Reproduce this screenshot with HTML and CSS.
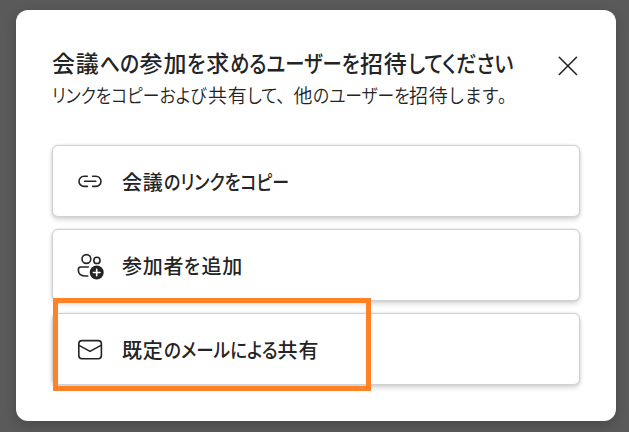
FILE: index.html
```html
<!DOCTYPE html>
<html lang="ja">
<head>
  <meta charset="UTF-8" />
  <meta name="viewport" content="width=device-width, initial-scale=1.0"/>
  <title>会議への招待</title>
  <link rel="stylesheet" href="styles.css">
</head>
<body>
  <div class="dialog" role="dialog">
    <div class="dialog-header">
      <div class="heading">
        <h1>会議<span class="kana title-1">への</span>参加<span class="kana title-2">を</span>求<span class="kana title-3">めるユーザーを</span>招待<span class="kana title-4">してください</span></h1>
        <p><span class="kana sub-1">リンクをコピーおよび</span>共有<span class="kana sub-2">して、</span>他<span class="kana sub-3">のユーザーを</span>招待<span class="kana sub-4">します。</span></p>
      </div>
      <button class="close-btn" aria-label="閉じる">
        <svg width="20" height="20" viewBox="0 0 20 20"><path d="M1.3 1.3l17.2 17.2M18.5 1.3L1.3 18.5"/></svg>
      </button>
    </div>

    <div class="options">
      <button class="option">
        <svg width="28" height="28" viewBox="0 0 28 28">
          <path d="M11.3 8.2H8.1a5.1 5.1 0 0 0 0 10.2h3.2M16.7 8.2h3.2a5.1 5.1 0 0 1 0 10.2h-3.2M8.6 13.3h11.2"/>
        </svg>
        <div class="label">会議<span class="kana copy-1">のリンクをコピー</span></div>
      </button>
      <button class="option">
        <svg width="28" height="28" viewBox="0 0 28 28">
          <circle cx="10.4" cy="7" r="4.4"/>
          <circle cx="20.9" cy="8.4" r="3.1"/>
          <path d="M12.3 15H4.8a2.4 2.4 0 0 0-2.4 2.4v1c0 3.6 3.3 5.6 7.8 5.6h1.6"/>
          <circle class="badge" cx="20.7" cy="20.5" r="7"/>
          <path class="plus" d="M20.7 17.2v6.6M17.4 20.5h6.6"/>
        </svg>
        <div class="label">参加者<span class="kana add-1">を</span>追加</div>
      </button>
      <button class="option">
        <svg width="28" height="28" viewBox="0 0 28 28">
          <rect x="2.8" y="4.6" width="22.6" height="18.2" rx="3.2"/>
          <path d="M3 9.4l11 6 11-6"/>
        </svg>
        <div class="label">既定<span class="kana mail-1">のメールによる</span>共有</div>
      </button>
      <div class="highlight"></div>
    </div>
  </div>
</body>
</html>
```
FILE: styles.css
```css
* {
  margin: 0; padding: 0; box-sizing: border-box;
  font-family: 'Noto Sans CJK JP', sans-serif;
}

body {
  background-color: #5a5a5a;
  color: #242424;
  height: 100vh;
  padding: 10px 13px 11px 16px;
  overflow: hidden;
}

.dialog {
  height: 411px;
  padding: 35px 36px 0;
  background-color: #ffffff;
  border-radius: 12px;
  box-shadow: 0 4px 12px rgba(0, 0, 0, 0.2);
}

.dialog-header {
  display: flex;
  justify-content: space-between;
  height: 100px;
}

.heading {
  white-space: nowrap;
}

h1 {
  font-size: 23px;
  line-height: 34px;
  letter-spacing: 0.8px;
  font-weight: 500;
}

.heading p {
  margin-top: 2px;
  font-size: 19px;
  line-height: 28px;
  letter-spacing: 0.7px;
  font-weight: 350;
}

/* condensed kana, each run keeps its own width */
.kana {
  display: inline-block;
  white-space: nowrap;
  letter-spacing: 0;
  font-feature-settings: 'palt';
  transform: scaleX(0.86);
  transform-origin: left;
}

.title-1 { width: 40px; }
.title-2 { width: 19px; }
.title-3 { width: 130px; transform: scaleX(0.84); }
.title-4 { width: 106px; transform: scaleX(0.875); }

.sub-1 { width: 156px; transform: scaleX(0.885); }
.sub-2 { width: 46px; transform: scaleX(0.92); }
.sub-3 { width: 96px; transform: scaleX(0.88); }
.sub-4 { width: 61px; letter-spacing: 1.2px; transform: scaleX(0.93); }

.copy-1 { width: 125px; transform: scaleX(0.85); }
.add-1 { width: 17px; }
.mail-1 { width: 114px; transform: scaleX(0.88); }

button {
  border: none;
  background: none;
  color: inherit;
  cursor: pointer;
}

svg {
  display: block;
  fill: none;
  stroke: #242424;
  stroke-width: 1.6;
  stroke-linecap: round;
  stroke-linejoin: round;
}

.close-btn {
  width: 20px;
  height: 20px;
  margin: 11px 2px 0 0;
}

.options {
  position: relative;
  display: flex;
  flex-direction: column;
  gap: 12px;
}

.option {
  display: flex;
  align-items: center;
  gap: 18px;
  height: 72px;
  padding: 1px 24px 0 23px;
  background-color: #ffffff;
  border: 1px solid #d1d1d1;
  border-radius: 6px;
  box-shadow: 0 3px 5px rgba(0, 0, 0, 0.15), 0 0 3px rgba(0, 0, 0, 0.12);
}

.label {
  padding-top: 1px;
  font-size: 20px;
  line-height: 30px;
  letter-spacing: 0.8px;
  font-weight: 500;
  white-space: nowrap;
}

.badge {
  fill: #242424;
  stroke: none;
}

.plus {
  stroke: #ffffff;
}

.highlight {
  position: absolute;
  left: 1px;
  top: 153px;
  width: 318px;
  height: 93px;
  border: 5px solid #ff8228;
}
```
